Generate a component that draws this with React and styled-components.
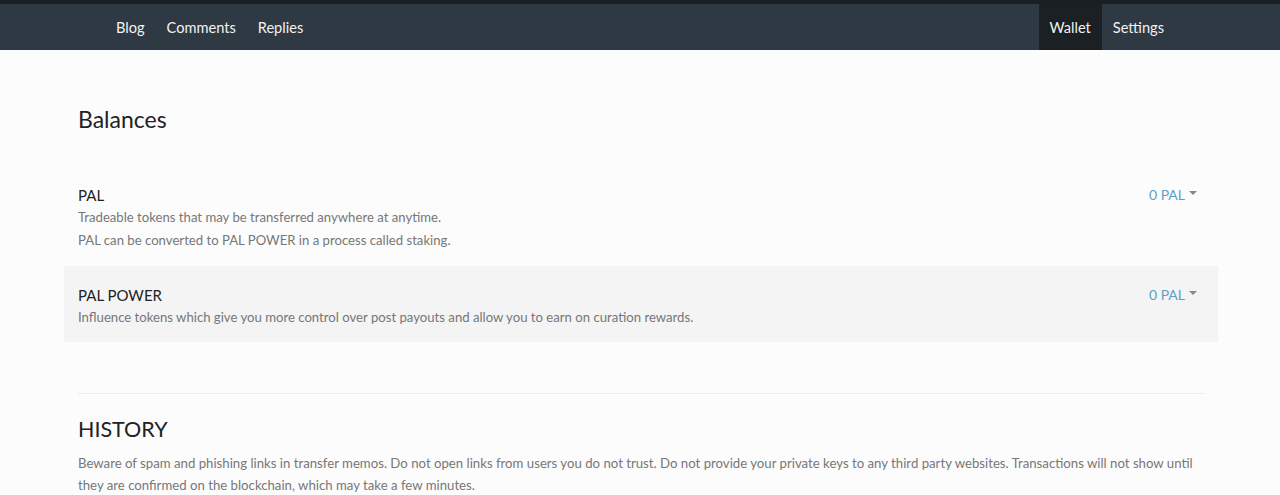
import React from 'react'
import styled, { createGlobalStyle } from 'styled-components'

const GlobalStyle = createGlobalStyle`
    body {
        margin: 0;
        background: #fcfcfc;
        font-family: "Source Sans Pro", Lato, "Noto Sans", sans-serif;
    }
`

const balances = [
    {
        name: 'PAL',
        lines: [
            'Tradeable tokens that may be transferred anywhere at anytime.',
            'PAL can be converted to PAL POWER in a process called staking.',
        ],
        value: '0 PAL',
    },
    {
        name: 'PAL POWER',
        lines: ['Influence tokens which give you more control over post payouts and allow you to earn on curation rewards.'],
        value: '0 PAL',
        shaded: true,
    },
]

function App() {
    return (
        <>
            <GlobalStyle />
            <Nav>
                <NavGroup>
                    <NavLink>Blog</NavLink>
                    <NavLink>Comments</NavLink>
                    <NavLink>Replies</NavLink>
                </NavGroup>
                <NavGroup>
                    <NavLink active>Wallet</NavLink>
                    <NavLink>Settings</NavLink>
                </NavGroup>
            </Nav>
            <Main>
                <Heading>Balances</Heading>
                {balances.map(b => (
                    <Row key={b.name} shaded={b.shaded}>
                        <div>
                            <Label>{b.name}</Label>
                            {b.lines.map(l => <Desc key={l}>{l}</Desc>)}
                        </div>
                        <Value>
                            {b.value}
                            <Caret />
                        </Value>
                    </Row>
                ))}
                <Divider />
                <Heading history>HISTORY</Heading>
                <Note>
                    Beware of spam and phishing links in transfer memos. Do not open links from users you do not trust. Do not provide your private keys to any third party websites. Transactions will not show until they are confirmed on the blockchain, which may take a few minutes.
                </Note>
            </Main>
        </>
    )
}

export default App

// barra de navegacao
const Nav = styled.nav`
    height: 46px;
    border-top: 4px solid #1a1f23;
    background: #2e3943;
    display: flex;
    justify-content: space-between;
    padding: 0 105px;
`
const NavGroup = styled.div`
    display: flex;
`
const NavLink = styled.a`
    display: flex;
    align-items: center;
    padding: 0 11px;
    font-size: 14.6px;
    color: #f2f2f2;
    cursor: pointer;
    background: ${p => (p.active ? '#1b2024' : 'transparent')};
`
// conteudo
const Main = styled.main`
    width: 1154px;
    margin-left: 64px;
    padding-top: 54px;
`
const Heading = styled.h2`
    margin: ${p => (p.history ? '20px' : '0')} 14px ${p => (p.history ? '8px' : '33px')};
    font-size: ${p => (p.history ? '21.5px' : '23px')};
    line-height: 30px;
    font-weight: 400;
    color: #222;
`
const Row = styled.div`
    display: flex;
    justify-content: space-between;
    align-items: flex-start;
    padding: ${p => (p.shaded ? '18px' : '17px')} 21px ${p => (p.shaded ? '13px' : '14px')} 14px;
    background: ${p => (p.shaded ? '#f4f4f4' : 'transparent')};
`
const Label = styled.div`
    font-size: 15px;
    line-height: 22px;
    color: #222;
`
const Desc = styled.div`
    font-size: 13.15px;
    line-height: 23px;
    color: #777;
`
const Value = styled.div`
    display: flex;
    align-items: center;
    font-size: 14px;
    line-height: 22px;
    color: #5c9fc6;
    cursor: pointer;
`
const Caret = styled.span`
    margin-left: 4px;
    margin-top: -4px;
    border-left: 4px solid transparent;
    border-right: 4px solid transparent;
    border-top: 4px solid #888;
`
const Divider = styled.hr`
    margin: 51px 13px 0 14px;
    border: 0;
    border-top: 1px solid #ececec;
`
const Note = styled.p`
    margin: 0 13px 0 14px;
    font-size: 13.2px;
    line-height: 22px;
    color: #777;
`
